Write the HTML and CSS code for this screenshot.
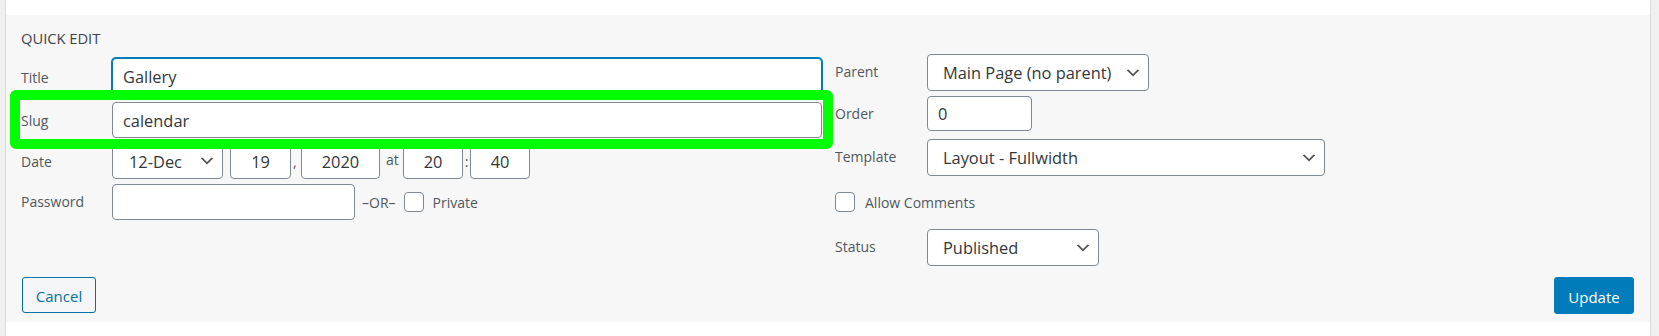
FILE: index.html
```html
<!DOCTYPE html>
<html lang="en">
<head>
<meta charset="utf-8">
<title>Quick Edit</title>
<link rel="stylesheet" href="styles.css">
</head>
<body>
<div class="table">
  <div class="panel">
    <div class="columns">
      <div class="col-left">
        <div class="legend">QUICK EDIT</div>
        <div class="row">
          <span class="label label-title">Title</span>
          <div class="field field-focus wide">Gallery</div>
        </div>
        <div class="row row-slug">
          <span class="label label-mid">Slug</span>
          <div class="field wide">calendar</div>
        </div>
        <div class="row row-date">
          <span class="label label-mid">Date</span>
          <div class="field select month">
            <span>12-Dec</span>
            <svg class="chev" viewBox="0 0 20 20" width="18" height="18"><path d="M5 6l5 5 5-5 2 1-7 7-7-7 2-1z" fill="#555"/></svg>
          </div>
          <div class="field num day">19</div>
          <span class="sep sep-comma">,</span>
          <div class="field num year">2020</div>
          <span class="sep sep-at">at</span>
          <div class="field num hour">20</div>
          <span class="sep sep-colon">:</span>
          <div class="field num minute">40</div>
        </div>
        <div class="row row-pass">
          <span class="label">Password</span>
          <div class="field password"></div>
          <span class="or">–OR–</span>
          <span class="checkbox check-private"></span>
          <span class="check-text">Private</span>
        </div>
      </div>
      <div class="col-right">
        <div class="row">
          <span class="label label-right">Parent</span>
          <div class="field select parent">
            <span>Main Page (no parent)</span>
            <svg class="chev" viewBox="0 0 20 20" width="18" height="18"><path d="M5 6l5 5 5-5 2 1-7 7-7-7 2-1z" fill="#555"/></svg>
          </div>
        </div>
        <div class="row row-order">
          <span class="label">Order</span>
          <div class="field order">0</div>
        </div>
        <div class="row row-template">
          <span class="label label-right">Template</span>
          <div class="field select template">
            <span>Layout - Fullwidth</span>
            <svg class="chev" viewBox="0 0 20 20" width="18" height="18"><path d="M5 6l5 5 5-5 2 1-7 7-7-7 2-1z" fill="#555"/></svg>
          </div>
        </div>
        <div class="row row-comments">
          <span class="checkbox"></span>
          <span class="check-text comments-text">Allow Comments</span>
        </div>
        <div class="row row-status">
          <span class="label label-right">Status</span>
          <div class="field select status">
            <span>Published</span>
            <svg class="chev" viewBox="0 0 20 20" width="18" height="18"><path d="M5 6l5 5 5-5 2 1-7 7-7-7 2-1z" fill="#555"/></svg>
          </div>
        </div>
      </div>
    </div>
    <div class="actions">
      <button class="btn btn-secondary" type="button">Cancel</button>
      <button class="btn btn-primary" type="button">Update</button>
    </div>
  </div>
</div>
<div class="highlight"></div>
</body>
</html>
```

FILE: styles.css
```css
* {
  box-sizing: border-box;
}

body {
  margin: 0;
  width: 1659px;
  height: 336px;
  overflow: hidden;
  background: #f0f0f1;
  font-family: "Open Sans", "Noto Sans", sans-serif;
  position: relative;
}

.table {
  margin-left: 5px;
  width: 1646px;
  border-left: 1px solid #dcdcde;
  border-right: 1px solid #dcdcde;
  background: #fff;
  padding: 15px 0 14px;
}

.panel {
  background: #f7f7f7;
  height: 307px;
  padding: 13px 16px 8px 15px;
  display: flex;
  flex-direction: column;
}

.columns {
  display: flex;
  gap: 12px;
}

.col-left {
  width: 802px;
  flex: none;
}

.col-right {
  flex: 1;
  padding-top: 26px;
}

.legend {
  font-size: 14.7px;
  line-height: 20px;
  color: #3c434a;
  margin-bottom: 10px;
}

.row {
  display: flex;
  align-items: center;
}

.label {
  width: 91px;
  flex: none;
  font-size: 14px;
  line-height: 20px;
  color: #50575e;
}

.col-right .label {
  width: 92px;
}

.label-title {
  padding-top: 4px;
}

.label-mid {
  padding-top: 2px;
}

.label-right {
  padding-bottom: 2px;
}

.field {
  height: 36px;
  border: 1px solid #7e8993;
  border-radius: 4px;
  background: #fff;
  font-size: 16.4px;
  color: #32373c;
  display: flex;
  align-items: center;
  padding: 0 10px;
  white-space: nowrap;
  flex: none;
}

.field-focus {
  border-color: #007cba;
  box-shadow: 0 0 0 1px #007cba;
}

.wide {
  width: 710px;
}

.row-slug {
  margin-top: 8px;
}

.row-date {
  margin-top: 5px;
}

.row-pass {
  margin-top: 5px;
}

.select {
  height: 37px;
  padding: 0 6px 0 15px;
}

.select .chev {
  margin-left: auto;
  flex: none;
}

.month {
  width: 111px;
  height: 36px;
  padding-left: 16px;
}

.num {
  justify-content: center;
  padding: 0;
}

.day {
  width: 61px;
  margin-left: 7px;
}

.year {
  width: 79px;
}

.hour,
.minute {
  width: 60px;
}

.sep {
  font-size: 14px;
  color: #50575e;
  flex: none;
}

.sep-comma {
  width: 10px;
  padding-left: 2px;
}

.sep-at {
  width: 23px;
  padding-left: 6px;
  padding-bottom: 3px;
}

.sep-colon {
  width: 7px;
  text-align: center;
}

.password {
  width: 243px;
}

.or {
  font-size: 14px;
  color: #50575e;
  margin-left: 7px;
}

.checkbox {
  width: 20px;
  height: 20px;
  flex: none;
  border: 1px solid #7e8993;
  border-radius: 4px;
  background: #fff;
}

.check-private {
  margin-left: 8px;
}

.check-text {
  font-size: 14px;
  color: #50575e;
  margin-left: 9px;
}

.comments-text {
  margin-left: 10px;
}

.parent {
  width: 222px;
}

.row-order {
  margin-top: 5px;
}

.order {
  width: 105px;
  height: 35px;
}

.row-template {
  margin-top: 8px;
}

.template {
  width: 398px;
}

.row-comments {
  margin-top: 16px;
}

.row-status {
  margin-top: 17px;
}

.status {
  width: 172px;
}

.actions {
  margin-top: auto;
  display: flex;
  justify-content: space-between;
  align-items: flex-start;
  padding-left: 1px;
}

.btn {
  font-family: inherit;
  font-size: 15px;
  border-radius: 3px;
  padding: 2px 0 0;
  cursor: pointer;
  line-height: 20px;
}

.btn-secondary {
  width: 74px;
  height: 36px;
  color: #0071a1;
  border: 1px solid #0071a1;
  background: #f3f5f6;
}

.btn-primary {
  width: 80px;
  height: 37px;
  color: #fff;
  border: 1px solid #007cba;
  background: #007cba;
}

.highlight {
  position: absolute;
  left: 10px;
  top: 90px;
  width: 823px;
  height: 59px;
  border: 10px solid #00ff00;
  border-radius: 6px;
  pointer-events: none;
}
```
